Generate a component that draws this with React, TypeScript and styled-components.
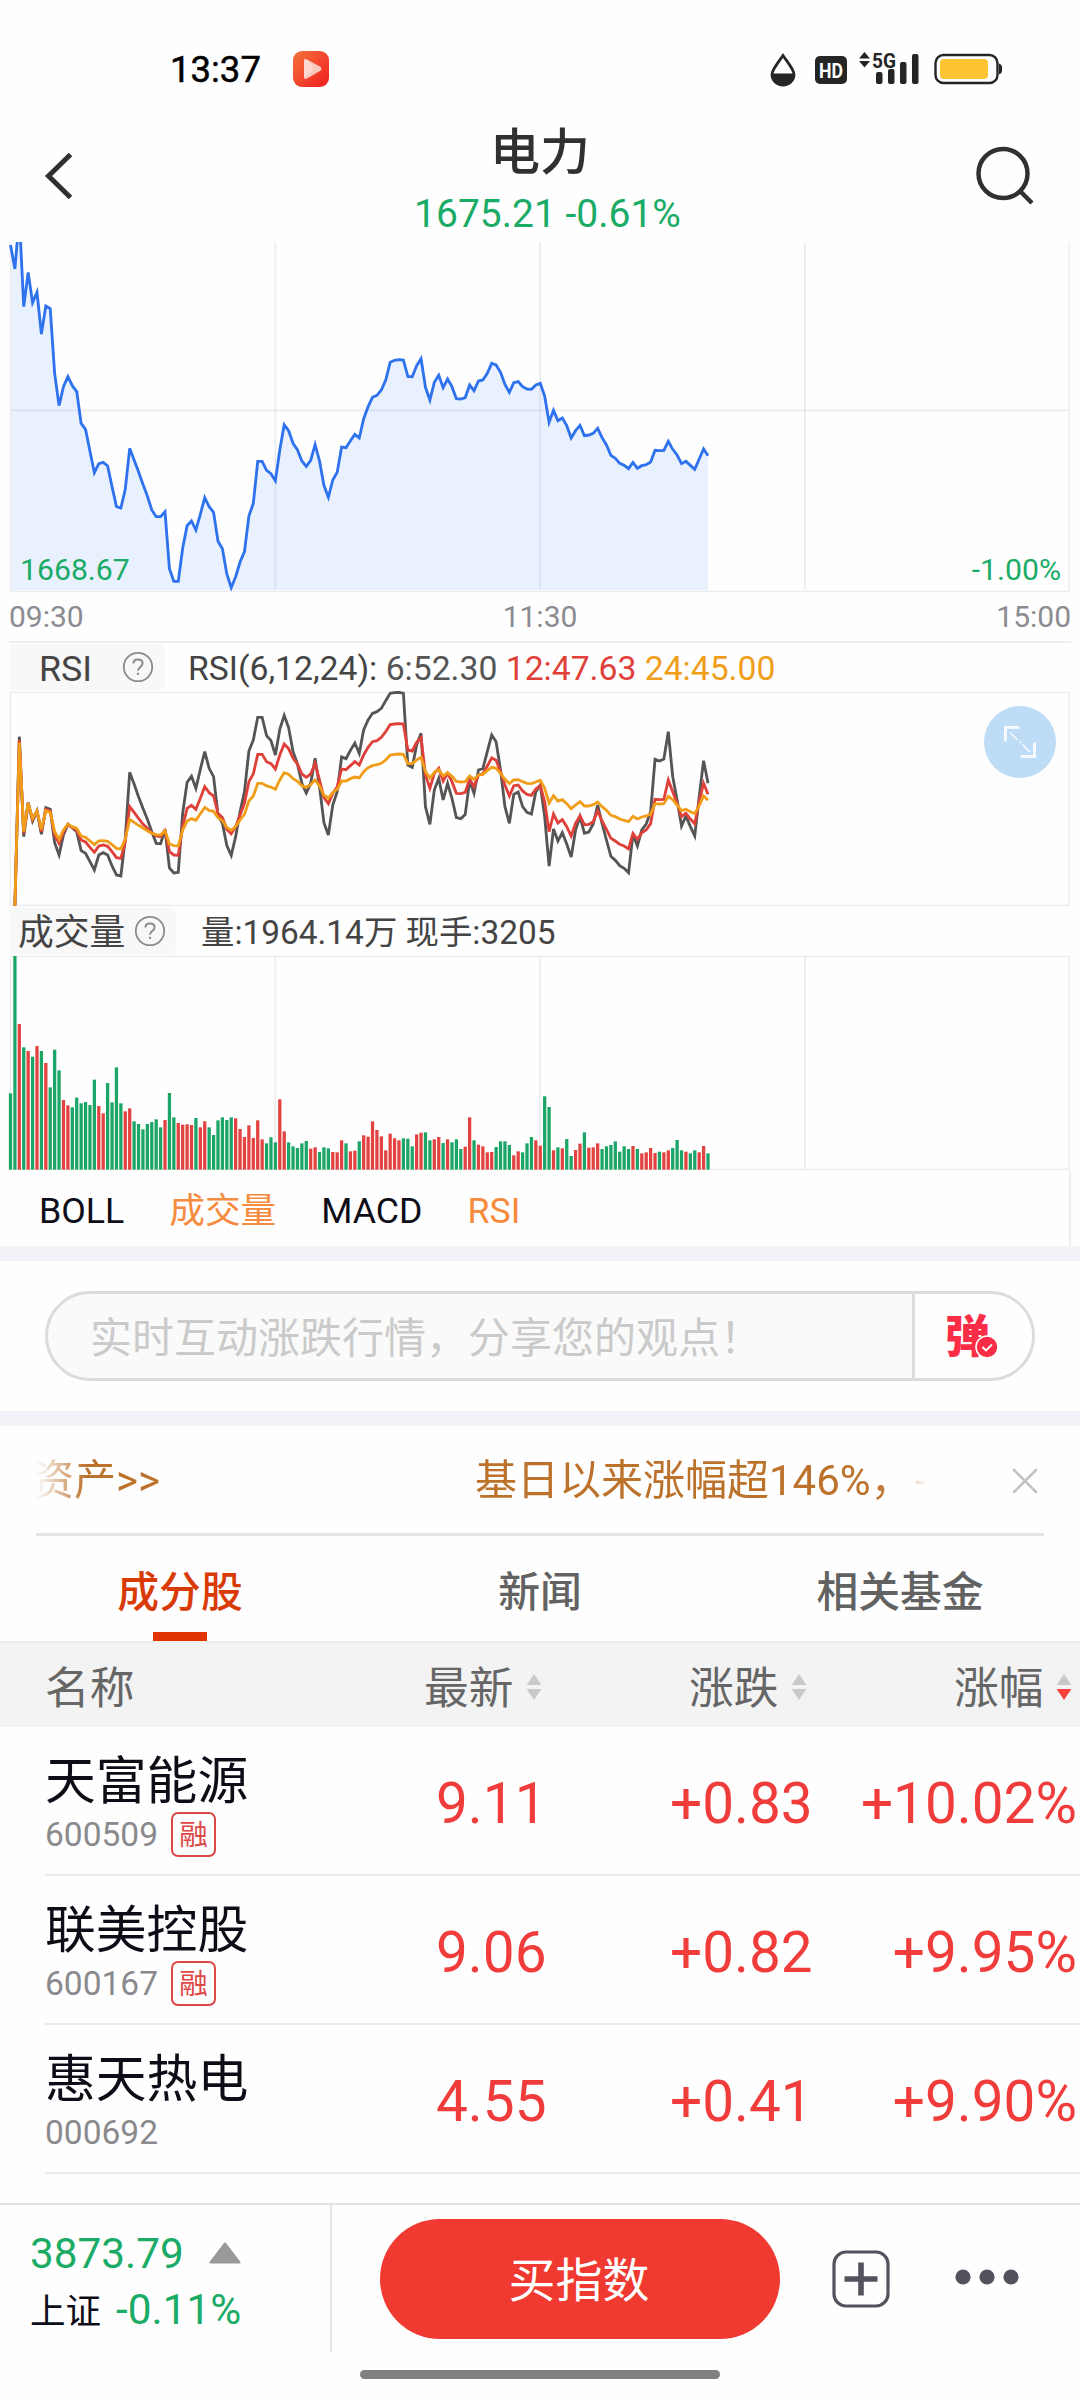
import React from "react";
import styled, { createGlobalStyle } from "styled-components";

const GREEN = "#1aab66";
const RED = "#f03d3c";
const GRID = "#ececee";

const GlobalStyle = createGlobalStyle`
  * { box-sizing: border-box; }
  body {
    margin: 0;
    background: #fefefe;
    font-family: Roboto, "Noto Sans CJK SC", sans-serif;
    color: #0d0d18;
  }
`;

/* ---------- data ---------- */

// One sample per trading minute; heights are in thirds of a pixel from the panel origin.
const STEP = 13.244;
const X0 = 31.5;

const PRICE = [
  45, 117, -40, 230, 127, 218, 187, 312, 228, 236, 430, 527, 470, 440, 467, 485, 580, 598, 664, 728,
  701, 697, 708, 770, 830, 834, 778, 655, 690, 725, 763, 798, 840, 860, 860, 845, 1016, 1054, 1054, 955,
  887, 873, 900, 853, 803, 830, 847, 934, 956, 1032, 1073, 1040, 996, 965, 858, 820, 694, 694, 721, 731,
  752, 660, 584, 602, 640, 660, 693, 709, 691, 644, 693, 766, 802, 750, 727, 651, 653, 632, 613, 624,
  566, 530, 502, 496, 480, 450, 397, 391, 389, 390, 439, 440, 407, 386, 472, 510, 457, 436, 473, 447,
  470, 506, 507, 503, 465, 482, 453, 450, 430, 400, 405, 427, 463, 487, 458, 455, 470, 477, 478, 465,
  460, 498, 577, 541, 572, 564, 587, 624, 602, 586, 617, 615, 610, 595, 623, 645, 676, 685, 700, 706,
  716, 697, 715, 707, 704, 696, 661, 662, 661, 634, 658, 675, 701, 694, 706, 718, 687, 657, 677,
];

// RSI lines start one minute after the open: [6, 12, 24] periods.
const RSI: number[][] = [
  [797, 797, 797], [290, 300, 308], [590, 580, 575], [488, 489, 490], [543, 538, 535], [513, 513, 513],
  [583, 575, 568], [503, 508, 512], [508, 513, 517], [608, 585, 575], [645, 610, 598], [585, 575, 570],
  [553, 553, 553], [563, 563, 560], [575, 570, 565], [632, 600, 588], [640, 606, 592], [665, 622, 603],
  [690, 637, 614], [645, 618, 603], [638, 615, 602], [645, 619, 604], [678, 635, 614], [705, 653, 625],
  [708, 655, 627], [595, 605, 597], [397, 500, 538], [432, 517, 547], [470, 535, 556], [505, 552, 564],
  [538, 565, 572], [575, 578, 580], [610, 588, 584], [611, 590, 585], [568, 572, 572], [684, 635, 612],
  [699, 645, 617], [697, 646, 618], [520, 560, 570], [427, 505, 543], [409, 496, 536], [445, 508, 541],
  [388, 475, 521], [335, 440, 502], [385, 458, 511], [410, 468, 514], [525, 520, 533], [550, 533, 542],
  [617, 568, 562], [646, 581, 571], [590, 560, 560], [515, 525, 540], [455, 490, 523], [333, 425, 483],
  [300, 402, 468], [232, 343, 430], [232, 343, 430], [287, 365, 438], [302, 371, 441], [345, 387, 448],
  [268, 345, 420], [226, 312, 398], [263, 326, 403], [335, 355, 416], [372, 372, 424], [430, 402, 437],
  [459, 412, 442], [430, 402, 434], [355, 370, 420], [440, 420, 438], [548, 473, 465], [585, 491, 475],
  [495, 460, 457], [455, 440, 448], [351, 387, 423], [356, 389, 423], [331, 377, 416], [309, 365, 411],
  [340, 375, 414], [270, 345, 395], [240, 322, 383], [220, 305, 377], [215, 302, 374], [205, 292, 370],
  [182, 275, 360], [160, 254, 345], [158, 252, 343], [157, 251, 342], [160, 252, 343], [375, 330, 371],
  [382, 333, 371], [315, 307, 360], [280, 293, 352], [500, 405, 395], [553, 445, 414], [450, 400, 397],
  [415, 385, 389], [480, 423, 408], [430, 400, 398], [475, 425, 409], [533, 460, 424], [536, 461, 426],
  [524, 457, 425], [422, 417, 408], [460, 440, 418], [390, 405, 405], [386, 402, 403], [335, 378, 392],
  [285, 354, 382], [305, 361, 385], [390, 395, 400], [500, 435, 418], [550, 468, 431], [463, 437, 420],
  [456, 435, 419], [500, 453, 425], [517, 463, 430], [522, 466, 431], [455, 447, 426], [435, 437, 421],
  [530, 485, 445], [678, 575, 489], [567, 522, 467], [603, 549, 483], [578, 539, 479], [612, 560, 491],
  [651, 588, 506], [570, 550, 495], [530, 527, 485], [580, 554, 498], [576, 553, 498], [552, 545, 494],
  [495, 513, 486], [550, 543, 500], [600, 568, 511], [649, 595, 526], [661, 603, 530], [677, 613, 537],
  [685, 618, 541], [698, 627, 545], [583, 580, 529], [618, 598, 537], [570, 578, 531], [552, 570, 528],
  [515, 551, 523], [358, 478, 491], [363, 479, 492], [357, 478, 491], [275, 420, 469], [410, 455, 479],
  [480, 490, 495], [558, 530, 512], [528, 520, 508], [560, 537, 515], [588, 551, 521], [470, 485, 497],
  [362, 430, 468], [430, 463, 481],
];

const VOLUME =
  ("580G 168G 372R 442G 453R 470G 438R 453G 489R 562G 449G 511G 600R 616R 622G 593G 610G 606G 615G 539G " +
  "618R 640R 549G 607G 502G 610G 634R 625R 664G 672G 688G 672G 666G 658G 682G 660R 579G 652G 669R 674R " +
  "673R 675R 654G 682R 664R 682G 705G 661G 652G 660G 652G 655R 687R 711R 676R 714R 661R 718R 730G 712G " +
  "727G 598R 694R 727G 739G 744G 730G 723G 746R 742R 756G 742G 745G 756R 757R 721R 730G 754R 752R 724G " +
  "706R 710R 664R 690R 709R 751R 701R 715R 721R 715G 716G 739G 703R 698R 697G 721G 718R 711R 729G 718R " +
  "727G 718G 747G 740R 652R 721G 734R 739R 757R 756R 741G 724G 724G 735G 766R 754R 757G 730G 711G 721R " +
  "737R 589G 621G 751R 742G 745R 717G 768G 750R 731R 697G 743R 742R 730R 747G 739G 735G 724G 755G 739G " +
  "747G 738R 747G 760R 757R 744R 759R 755G 757R 751R 744G 720G 751G 755R 760G 751G 757R 738R 760G").split(" ");

const STOCKS = [
  { name: "天富能源", code: "600509", margin: true, price: "9.11", change: "+0.83", pct: "+10.02%" },
  { name: "联美控股", code: "600167", margin: true, price: "9.06", change: "+0.82", pct: "+9.95%" },
  { name: "惠天热电", code: "000692", margin: false, price: "4.55", change: "+0.41", pct: "+9.90%" },
];

const line = (ys: number[], first = 0) =>
  ys.map((y, i) => `${(X0 + (i + first) * STEP).toFixed(1)},${y}`).join(" ");

/* ---------- layout ---------- */

const Screen = styled.div`
  width: 1080px;
  height: 2400px;
  display: flex;
  flex-direction: column;
  overflow: hidden;
  background: #fefefe;
`;

const StatusBar = styled.div`
  height: 110px;
  flex: none;
  display: flex;
  align-items: center;
  padding: 28px 76px 0 170px;
`;
const Clock = styled.span`
  font-size: 36.5px;
  line-height: 40px;
  font-weight: 400;
  -webkit-text-stroke: 0.5px #000;
  color: #000;
  width: 123px;
  padding-top: 2px;
`;
const StatusIcons = styled.div`
  margin-left: auto;
  padding-top: 2px;
  display: flex;
  align-items: center;
`;

const Header = styled.header`
  height: 132px;
  flex: none;
  display: grid;
  grid-template-columns: 120px 1fr 120px;
`;
const HeaderTitle = styled.div`
  display: flex;
  flex-direction: column;
  align-items: center;
  padding-top: 13px;
`;
const Title = styled.h1`
  margin: 0 0 6px;
  font-size: 50px;
  line-height: 60px;
  font-weight: 500;
  color: #303030;
`;
const Quote = styled.div`
  font-size: 39px;
  line-height: 50px;
  color: ${GREEN};
  padding-left: 15px;
`;

const Panel = styled.div<{ $h: number }>`
  position: relative;
  height: ${(p) => p.$h}px;
  flex: none;
  & > svg { display: block; }
`;
const ChartLabel = styled.span<{ $side: "left" | "right" }>`
  position: absolute;
  bottom: 1px;
  ${(p) => p.$side}: ${(p) => (p.$side === "left" ? 20 : 19)}px;
  font-size: 30.2px;
  line-height: 42px;
  color: ${GREEN};
`;
const ExpandButton = styled.button`
  position: absolute;
  right: 24px;
  top: 15px;
  width: 72px;
  height: 72px;
  padding: 0;
  border: 0;
  border-radius: 50%;
  background: #bedcf6;
  display: grid;
  place-items: center;
`;

const TimeAxis = styled.div`
  height: 49px;
  flex: none;
  display: grid;
  grid-template-columns: 1fr 1fr 1fr;
  padding: 0 9px;
  font-size: 30px;
  line-height: 50px;
  color: #8b8b90;
  & > :nth-child(2) { text-align: center; }
  & > :nth-child(3) { text-align: right; }
`;
const AxisRule = styled.div`
  height: 2px;
  flex: none;
  margin: 0 9px;
  background: #eeeeef;
`;

const IndicatorHead = styled.div`
  height: 48px;
  flex: none;
  display: flex;
  padding: 1px 9px;
  color: #444;
`;
const IndicatorTag = styled.div<{ $w: number; $pad: number }>`
  width: ${(p) => p.$w}px;
  height: 46px;
  padding: 0 ${(p) => (p.$pad > 20 ? 11 : 10)}px 0 ${(p) => p.$pad}px;
  background: #f8f8f9;
  border-radius: 6px;
  display: flex;
  align-items: center;
  justify-content: space-between;
  font-size: 35.8px;
  line-height: 46px;
  white-space: nowrap;
`;
const TagText = styled.span`
  padding-top: 3px;
`;
const IndicatorText = styled.div<{ $gap: number; $size: number }>`
  margin-left: ${(p) => p.$gap}px;
  font-size: ${(p) => p.$size}px;
  line-height: 49px;
  white-space: pre;
`;
const Tint = styled.span<{ $c: string }>`
  color: ${(p) => p.$c};
`;

const IndicatorTabs = styled.div`
  height: 75px;
  flex: none;
  margin-right: 9px;
  padding: 0 0 0 39px;
  border-right: 2px solid #eeeeef;
  display: flex;
  gap: 45px;
  font-size: 35.7px;
  line-height: 80px;
`;
const IndicatorTab = styled.span<{ $on?: boolean }>`
  color: ${(p) => (p.$on ? "#f68a3d" : "#0d0d18")};
`;

const Band = styled.div`
  height: 15px;
  flex: none;
  background: #f1f3f8;
`;

const CommentArea = styled.div`
  height: 150px;
  flex: none;
  padding: 30px 45px;
`;
const CommentBox = styled.div`
  height: 90px;
  border: 3px solid #dcdcdc;
  border-radius: 45px;
  background: #fafafa;
  display: flex;
  overflow: hidden;
`;
const Placeholder = styled.div`
  flex: 1;
  padding-left: 42px;
  font-size: 42px;
  line-height: 89px;
  color: #cacaca;
  white-space: nowrap;
`;
const BarrageToggle = styled.div`
  position: relative;
  width: 120px;
  padding-left: 30px;
  border-left: 3px solid #dcdcdc;
  background: #fefefe;
  font-size: 45px;
  line-height: 87px;
  font-weight: 900;
  color: #fb2c45;
  & > svg { position: absolute; left: 60px; top: 41px; }
`;

const Notice = styled.div`
  height: 110px;
  flex: none;
  margin: 0 36px;
  border-bottom: 3px solid #e3e3e3;
  display: flex;
  align-items: center;
  justify-content: space-between;
  padding: 2px 6px 0 0;
`;
const Marquee = styled.div`
  width: 892px;
  display: flex;
  overflow: hidden;
  font-size: 42px;
  line-height: 60px;
  color: #bd722c;
  white-space: nowrap;
  mask-image: linear-gradient(90deg, transparent 0, #000 50px, #000 842px, transparent 100%);
`;
const MarqueeItem = styled.span<{ $w: number; $shift?: number }>`
  flex: none;
  width: ${(p) => p.$w}px;
  margin-left: ${(p) => -(p.$shift ?? 0)}px;
`;

const Tabs = styled.nav`
  height: 105px;
  flex: none;
  display: grid;
  grid-template-columns: repeat(3, 1fr);
`;
const Tab = styled.div<{ $on?: boolean }>`
  display: flex;
  flex-direction: column;
  align-items: center;
  justify-content: space-between;
  padding-top: 27px;
  font-size: 41.8px;
  line-height: 60px;
  font-weight: 500;
  color: ${(p) => (p.$on ? "#d93b06" : "#626262")};
  &::after {
    content: "";
    width: 54px;
    height: 9px;
    background: ${(p) => (p.$on ? "#e13602" : "transparent")};
  }
`;

const TableHead = styled.div`
  height: 86px;
  flex: none;
  display: grid;
  grid-template-columns: 379px 265px 265px 1fr;
  padding-left: 45px;
  border-top: 2px solid #ededed;
  background: #f3f3f3;
  font-size: 44.7px;
  line-height: 84px;
  color: #666;
`;
const HeadCell = styled.div`
  display: flex;
  align-items: center;
  gap: 13px;
  white-space: nowrap;
`;
const HeadText = styled.span`
  padding-top: 4px;
`;
const Row = styled.div`
  height: 149px;
  flex: none;
  margin-left: 45px;
  border-bottom: 2px solid #ebebed;
  display: grid;
  grid-template-columns: 391px 234px 1fr 1fr;
  align-items: center;
`;
const StockName = styled.div`
  font-size: 50.8px;
  line-height: 58px;
  margin-top: 9px;
`;
const StockCode = styled.div`
  display: flex;
  align-items: center;
  gap: 13px;
  height: 46px;
  margin-top: 1px;
  font-size: 33.5px;
  line-height: 46px;
  color: #8a8a8d;
`;
const MarginBadge = styled.span`
  width: 45px;
  height: 45px;
  border: 2px solid #dd4745;
  border-radius: 7px;
  font-size: 28.5px;
  line-height: 43px;
  text-align: center;
  color: #dd4745;
`;
const Figure = styled.div<{ $right?: boolean }>`
  padding: 7px ${(p) => (p.$right ? 3 : 0)}px 0 0;
  font-size: 56.7px;
  line-height: 70px;
  color: ${RED};
  text-align: ${(p) => (p.$right ? "right" : "left")};
  white-space: nowrap;
`;

const Footer = styled.footer`
  height: 197px;
  flex: none;
  margin-top: auto;
  border-top: 2px solid #e4e4e6;
  display: grid;
  grid-template-rows: 147px 1fr;
  background: #fefefe;
`;
const FooterRow = styled.div`
  display: flex;
`;
const IndexBox = styled.div`
  width: 332px;
  border-right: 2px solid #e6e6e8;
  padding: 22px 0 0 30px;
  font-size: 42.3px;
  line-height: 54px;
  color: ${GREEN};
`;
const IndexLine = styled.div`
  display: flex;
  align-items: center;
  & > svg { margin: -2px 0 0 25px; }
`;
const IndexName = styled.span`
  font-size: 35.5px;
  color: #0d0d18;
  margin-right: 15px;
  padding-top: 4px;
`;
const BuyButton = styled.button`
  width: 400px;
  height: 120px;
  margin: 14px 0 0 48px;
  border: 0;
  border-radius: 60px;
  background: #f03930;
  color: #fff;
  font: 47px/118px Roboto, "Noto Sans CJK SC", sans-serif;
  padding: 3px 2px 0 0;
`;
const FooterIcon = styled.div<{ $ml: number; $mt: number }>`
  margin: ${(p) => p.$mt}px 0 0 ${(p) => p.$ml}px;
  & > svg { display: block; }
`;
const HomeBar = styled.div`
  width: 360px;
  height: 9px;
  margin: 18px auto 0;
  border-radius: 5px;
  background: #808080;
`;

/* ---------- parts ---------- */

const Help = () => (
  <svg width="32" height="32" viewBox="0 0 32 32" fill="none" stroke="#8b8b92" strokeWidth="1.8">
    <circle cx="16" cy="16" r="14.2" />
    <path d="M11.4 12.6c0-2.5 1.9-4.2 4.6-4.2s4.6 1.6 4.6 3.900c0 3.700-4.600 3.800-4.600 7.400" strokeWidth="2" />
    <path d="M16 21.8v2.1" strokeWidth="2.1" />
  </svg>
);

const Sort = ({ down }: { down?: boolean }) => (
  <svg width="16" height="28" viewBox="0 0 16 28">
    <path d="M8 1 15.4 12H.6z" fill="#c9c9c9" />
    <path d="M.6 16H15.4L8 27z" fill={down ? "#f5403c" : "#c9c9c9"} />
  </svg>
);

const StatusGlyphs = () => (
  <svg width="236" height="40" viewBox="768 50 236 40" fill="#252525">
    <path d="M783 55.5c5 7.5 11 14 11 19a11 10.500 0 0 1-22 0c0-5 6-11.500 11-19z" fill="none" stroke="#252525" strokeWidth="2.800" />
    <path d="M772 73.500h22v1a11 10.500 0 0 1-22 0z" />
    <rect x="815" y="56" width="32" height="28" rx="5" />
    <text x="831" y="77.500" fontSize="21" fontWeight="700" fill="#fff" textAnchor="middle" textLength="24" lengthAdjust="spacingAndGlyphs">HD</text>
    <path d="M864.500 52l5.500 6.500h-11zM864.500 67.500l5.500-6.500h-11z" />
    <text x="872" y="67.500" fontSize="20.500" fontWeight="700" textLength="24" lengthAdjust="spacingAndGlyphs">5G</text>
    <rect x="876" y="72" width="6.500" height="12" rx="2" />
    <rect x="888" y="69" width="6.500" height="15" rx="2" />
    <rect x="900" y="62" width="6.500" height="22" rx="2" />
    <rect x="912" y="54" width="6.500" height="30" rx="2" />
    <rect x="935.500" y="55" width="62" height="28" rx="8" fill="none" stroke="#252525" strokeWidth="2.400" />
    <rect x="940" y="59" width="48" height="20" rx="4" fill="#ffc432" />
    <path d="M999 63.500c2 1 3 2 3 3.500v4c0 1.500-1 2.500-3 3.500z" />
  </svg>
);

const PriceChart = () => (
  <Panel $h={350}>
    <svg width="1080" height="350" viewBox="0 36 3240 1050">
      <polygon points={`${X0},1080 ${line(PRICE)} ${X0 + 158 * STEP},1080`} fill="#e9f1ff" />
      <path d="M31 541H3208" stroke="#8c96a8" strokeOpacity=".17" strokeWidth="5" />
      <path d="M31 1084H3208" stroke={GRID} strokeWidth="4" />
      <path d="M826 0V1080M1620 0V1080M2415 0V1080" stroke="#8c96a8" strokeOpacity=".17" strokeWidth="5" />
      <path d="M31 0V1084M3208 0V1084" stroke={GRID} strokeWidth="4" />
      <polyline points={line(PRICE)} fill="none" stroke="#2f72ee" strokeWidth="8.500" />
    </svg>
    <ChartLabel $side="left">1668.67</ChartLabel>
    <ChartLabel $side="right">-1.00%</ChartLabel>
  </Panel>
);

const RsiChart = () => (
  <Panel $h={216}>
    <svg width="1080" height="216" viewBox="0 153 3240 648">
      <rect x="31" y="157" width="3177" height="639" fill="none" stroke={GRID} strokeWidth="4" />
      {["#555", "#e0403a", "#f09e1a"].map((c, k) => (
        <polyline key={c} points={line(RSI.map((r) => r[k]), 1)} fill="none" stroke={c} strokeWidth="8.500" />
      ))}
    </svg>
    <ExpandButton>
      <svg width="34" height="34" viewBox="0 0 34 34" fill="none" stroke="#f4faff">
        <path d="M2.500 16.500V2.500H16.500M17.500 31.500H31.500V17.500" strokeWidth="3" />
        <path d="M7 7.500 14.500 15M16.300 16.600l1.600 1.600M19.500 19.500 27 27" strokeWidth="1.500" />
      </svg>
    </ExpandButton>
  </Panel>
);

const VolumeChart = () => (
  <Panel $h={216}>
    <svg width="1080" height="216" viewBox="0 165 3240 648">
      <rect x="31" y="169" width="3177" height="639" fill="none" stroke={GRID} strokeWidth="4" />
      <path d="M826 169V808M1620 169V808M2415 169V808" stroke={GRID} strokeWidth="5" />
      {VOLUME.map((v, i) => {
        const y = parseInt(v, 10);
        return (
          <rect
            key={i}
            x={X0 + i * STEP - 4.9}
            y={y}
            width="9.800"
            height={809 - y}
            fill={v.endsWith("G") ? "#1ba566" : "#e24341"}
          />
        );
      })}
    </svg>
  </Panel>
);

export default function App() {
  return (
    <Screen>
      <GlobalStyle />
      <StatusBar>
        <Clock>13:37</Clock>
        <svg width="36" height="36" viewBox="0 0 36 36">
          <defs>
            <linearGradient id="appIcon" x1="0" y1="0" x2="1" y2="1">
              <stop offset="0" stopColor="#f4743b" />
              <stop offset="1" stopColor="#f01c20" />
            </linearGradient>
          </defs>
          <rect width="36" height="36" rx="9" fill="url(#appIcon)" />
          <path d="M11 10q0-3 3-1.500L27 15.500q3 2.300 0 4.600L14 27.500q-3 1.500-3-1.500z" fill="#fcc9bd" />
          <path d="M11 10q0-3 3-1.500L21 18l-10 9z" fill="#fff" fillOpacity=".3" />
        </svg>
        <StatusIcons>
          <StatusGlyphs />
        </StatusIcons>
      </StatusBar>

      <Header>
        <svg width="120" height="132" viewBox="0 110 120 132" fill="none" stroke="#303030" strokeWidth="5">
          <path d="M70.500 154.500 48.500 176 70.500 197.500" />
        </svg>
        <HeaderTitle>
          <Title>电力</Title>
          <Quote>1675.21 -0.61%</Quote>
        </HeaderTitle>
        <svg width="120" height="132" viewBox="960 110 120 132" fill="none" stroke="#303030" strokeWidth="4.500">
          <circle cx="1003" cy="173.500" r="24.500" />
          <path d="M1019.500 190.500 1032 203" />
        </svg>
      </Header>

      <PriceChart />
      <TimeAxis>
        <span>09:30</span>
        <span>11:30</span>
        <span>15:00</span>
      </TimeAxis>
      <AxisRule />

      <IndicatorHead>
        <IndicatorTag $w={156} $pad={30}>
          <TagText>RSI</TagText> <Help />
        </IndicatorTag>
        <IndicatorText $gap={23} $size={33.7}>
          RSI(6,12,24): <Tint $c="#555">6:52.30</Tint> <Tint $c="#e0403a">12:47.63</Tint>{" "}
          <Tint $c="#f09e1a">24:45.00</Tint>
        </IndicatorText>
      </IndicatorHead>
      <RsiChart />

      <IndicatorHead>
        <IndicatorTag $w={167} $pad={9}>
          <TagText>成交量</TagText> <Help />
        </IndicatorTag>
        <IndicatorText $gap={25} $size={33.4}>量:1964.14万 现手:3205</IndicatorText>
      </IndicatorHead>
      <VolumeChart />

      <IndicatorTabs>
        <IndicatorTab>BOLL</IndicatorTab>
        <IndicatorTab $on>成交量</IndicatorTab>
        <IndicatorTab>MACD</IndicatorTab>
        <IndicatorTab $on>RSI</IndicatorTab>
      </IndicatorTabs>

      <Band />
      <CommentArea>
        <CommentBox>
          <Placeholder>实时互动涨跌行情，分享您的观点！</Placeholder>
          <BarrageToggle>
            弹
            <svg width="24" height="24" viewBox="0 0 24 24">
              <circle cx="12" cy="12" r="11" fill="#fb2c45" stroke="#fefefe" strokeWidth="1.600" />
              <path d="M7.500 12 11 15.500 17 9.500" fill="none" stroke="#fff" strokeWidth="1.800" />
            </svg>
          </BarrageToggle>
        </CommentBox>
      </CommentArea>
      <Band />

      <Notice>
        <Marquee>
          <MarqueeItem $w={443} $shift={4}>资产&gt;&gt;</MarqueeItem>
          <MarqueeItem $w={440}>基日以来涨幅超146%，</MarqueeItem>
          <MarqueeItem $w={20}>-</MarqueeItem>
        </Marquee>
        <svg width="26" height="26" viewBox="0 0 26 26" stroke="#c2c2c2" strokeWidth="2.600" strokeLinecap="round">
          <path d="M2 2 24 24M24 2 2 24" />
        </svg>
      </Notice>

      <Tabs>
        <Tab $on>成分股</Tab>
        <Tab>新闻</Tab>
        <Tab>相关基金</Tab>
      </Tabs>

      <TableHead>
        <HeadCell><HeadText>名称</HeadText></HeadCell>
        <HeadCell><HeadText>最新</HeadText> <Sort /></HeadCell>
        <HeadCell><HeadText>涨跌</HeadText> <Sort /></HeadCell>
        <HeadCell><HeadText>涨幅</HeadText> <Sort down /></HeadCell>
      </TableHead>
      {STOCKS.map((s) => (
        <Row key={s.code}>
          <div>
            <StockName>{s.name}</StockName>
            <StockCode>
              {s.code}
              {s.margin && <MarginBadge>融</MarginBadge>}
            </StockCode>
          </div>
          <Figure>{s.price}</Figure>
          <Figure>{s.change}</Figure>
          <Figure $right>{s.pct}</Figure>
        </Row>
      ))}

      <Footer>
        <FooterRow>
          <IndexBox>
            <IndexLine>
              3873.79
              <svg width="32" height="22" viewBox="0 0 32 22">
                <path d="M14.800 1.200q1.200-1.400 2.400 0L31.500 20q.6 1.500-1 1.500H1.500q-1.600 0-1-1.500z" fill="#999" />
              </svg>
            </IndexLine>
            <IndexLine>
              <IndexName>上证</IndexName>-0.11%
            </IndexLine>
          </IndexBox>
          <BuyButton>买指数</BuyButton>
          <FooterIcon $ml={52} $mt={45}>
            <svg width="58" height="58" viewBox="0 0 58 58" fill="none" stroke="#53535d">
              <rect x="2" y="2" width="54" height="54" rx="12" strokeWidth="3.200" />
              <path d="M29 12.500V45.500M12.500 29H45.500" strokeWidth="5.600" />
            </svg>
          </FooterIcon>
          <FooterIcon $ml={65} $mt={64}>
            <svg width="64" height="16" viewBox="0 0 64 16" fill="#53535d">
              <circle cx="8" cy="8" r="7.600" />
              <circle cx="32" cy="8" r="7.600" />
              <circle cx="56" cy="8" r="7.600" />
            </svg>
          </FooterIcon>
        </FooterRow>
        <HomeBar />
      </Footer>
    </Screen>
  );
}
